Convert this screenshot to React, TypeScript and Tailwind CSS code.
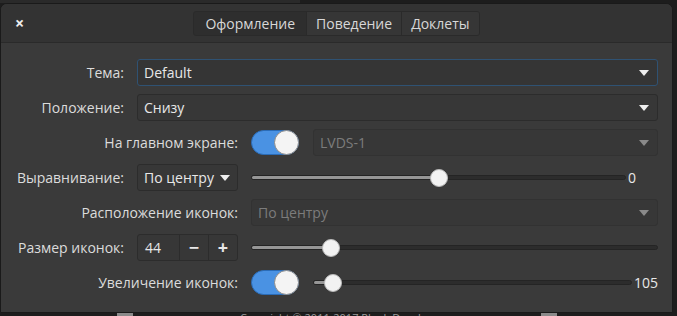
import React from "react";

const Arrow = ({ dim }: { dim?: boolean }) => (
  <svg width="10" height="6" viewBox="0 0 10 6" className="shrink-0">
    <path d="M0 0 L10 0 L5 6 Z" fill={dim ? "#8a8a8a" : "#eeeeee"} />
  </svg>
);

const Combo = ({ text, focus, dim }: { text: string; focus?: boolean; dim?: boolean }) => (
  <div
    className={`flex h-[27px] items-center justify-between rounded-[3px] border px-[6px] pr-[8px] ${
      focus ? "border-[#2f5273] bg-[#353535]" : "border-[#2c2c2c] bg-[#373737]"
    } ${dim ? "bg-[#3a3a3a] border-[#323232]" : ""}`}
  >
    <span className={dim ? "text-[#7c7c7c]" : "text-[#e8e8e8]"}>{text}</span>
    <Arrow dim={dim} />
  </div>
);

const Switch = () => (
  <div className="relative h-[25px] w-[48px] shrink-0 rounded-full border border-[#2a6cb8] bg-[#4a92e3]">
    <div className="absolute right-[-1px] top-[-1px] h-[25px] w-[25px] rounded-full border border-[#8a8a8a] bg-[#f4f4f4]" />
  </div>
);

const Slider = ({ pct, value, valueW }: { pct: number; value?: string; valueW?: string }) => (
  <div className="flex h-[27px] items-center">
    <div className="relative h-[5px] flex-1 rounded-full border border-[#242424] bg-[#2c2c2c]">
      <div className="absolute left-0 top-0 h-full rounded-full bg-[#969696]" style={{ width: `${pct}%` }} />
      <div
        className="absolute top-1/2 h-[18px] w-[18px] -translate-x-1/2 -translate-y-1/2 rounded-full border border-[#b9b9b9] bg-[#f2f2f2]"
        style={{ left: `${pct}%` }}
      />
    </div>
    {value && <span className={`ml-[2px] text-[#e8e8e8] ${valueW ?? ""}`}>{value}</span>}
  </div>
);

const Label = ({ children, span }: { children: React.ReactNode; span?: boolean }) => (
  <div className={`flex h-[27px] items-center justify-end whitespace-nowrap text-[#dcdcdc] ${span ? "col-span-2" : ""}`}>
    {children}
  </div>
);

export default function App() {
  return (
    <div
      className="relative h-[316px] w-[677px] overflow-hidden bg-[#1d1d1d] text-[14px]"
      style={{ fontFamily: '"Open Sans", "Noto Sans", sans-serif' }}
    >
      <div className="h-[3px] w-[300px] bg-[#2a2a2a]" />
      <div className="flex h-[310px] w-[673px] flex-col overflow-hidden rounded-t-[7px] border border-[#1a1a1a] bg-[#3a3a3a]">
        <div className="grid h-[39px] grid-cols-[1fr_auto_1fr] items-center border-b border-[#2a2a2a] bg-[#333333]">
          <div className="pl-[14px] text-[16px] font-bold leading-none text-[#eeeeee]">×</div>
          <div className="flex h-[25px] overflow-hidden rounded-[3px] border border-[#2a2a2a] text-[14px] text-[#d8d8d8]">
            <div className="flex items-center bg-[#2e2e2e] px-[11px]">Оформление</div>
            <div className="flex items-center border-l border-[#2a2a2a] bg-[#363636] px-[9px]">Поведение</div>
            <div className="flex items-center border-l border-[#2a2a2a] bg-[#363636] px-[9px]">Доклеты</div>
          </div>
          <div />
        </div>

        <div className="grid grid-cols-[123px_101px_1fr] gap-x-[13px] gap-y-[8px] pr-[14px] pt-[16px]">
          <Label>Тема:</Label>
          <div className="col-span-2">
            <Combo text="Default" focus />
          </div>

          <Label>Положение:</Label>
          <div className="col-span-2">
            <Combo text="Снизу" />
          </div>

          <Label span>На главном экране:</Label>
          <div className="flex items-center gap-[14px]">
            <Switch />
            <div className="flex-1">
              <Combo text="LVDS-1" dim />
            </div>
          </div>

          <Label>Выравнивание:</Label>
          <div className="flex h-[27px] items-center gap-[6px] whitespace-nowrap rounded-[3px] border border-[#2c2c2c] bg-[#373737] px-[6px] text-[#e8e8e8]">
            <span>По центру</span>
            <Arrow />
          </div>
          <Slider pct={50} value="0" valueW="w-[30px]" />

          <Label span>Расположение иконок:</Label>
          <Combo text="По центру" dim />

          <Label>Размер иконок:</Label>
          <div className="flex h-[27px] rounded-[3px] border border-[#2c2c2c] bg-[#373737] text-[#e8e8e8]">
            <div className="flex flex-1 items-center px-[7px]">44</div>
            <div className="flex w-[29px] items-center justify-center border-l border-[#2c2c2c] text-[18px] font-bold">−</div>
            <div className="flex w-[29px] items-center justify-center border-l border-[#2c2c2c] text-[18px] font-bold">+</div>
          </div>
          <Slider pct={19.5} />

          <Label span>Увеличение иконок:</Label>
          <div className="flex items-center gap-[14px]">
            <Switch />
            <div className="flex-1">
              <Slider pct={6} value="105" />
            </div>
          </div>
        </div>
      </div>
      <div className="relative h-[3px]">
        <div className="absolute left-[117px] top-0 h-[4px] w-[16px] bg-[#8a8a8a]" />
        <div className="absolute left-[541px] top-0 h-[4px] w-[16px] bg-[#8a8a8a]" />
        <div className="absolute left-[240px] top-[-1px] text-[11px] leading-none text-[#9a9a9a]">
          Copyright © 2011-2017 Plank Developers
        </div>
      </div>
    </div>
  );
}
